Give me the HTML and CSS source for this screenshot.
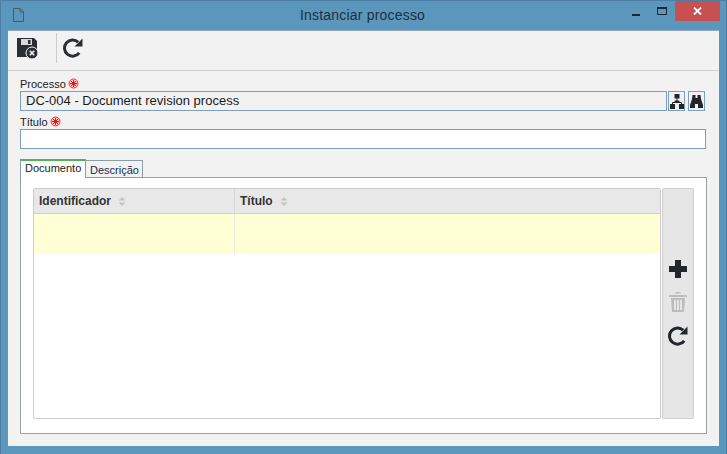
FILE: index.html
```html
<!DOCTYPE html>
<html lang="pt">
<head>
<meta charset="utf-8">
<title>Instanciar processo</title>
<link rel="stylesheet" href="styles.css">
</head>
<body>
<div class="window">
  <header class="titlebar">
    <svg class="doc-icon" width="11" height="14" viewBox="0 0 11 14"><path d="M.5.5h6.500l3.500 3.500v9.500h-10zM7 .5v3.500h3.500" fill="none" stroke="#4c5a66"/></svg>
    <div class="title">Instanciar processo</div>
    <div class="controls">
      <span class="ctl"><svg width="8" height="2" viewBox="0 0 8 2"><rect width="8" height="2" fill="#20262c"/></svg></span>
      <span class="ctl max"><svg width="10" height="8" viewBox="0 0 10 8"><path d="M.5 1h9v6.500h-9z" fill="none" stroke="#20262c"/><rect width="10" height="2" fill="#20262c"/></svg></span>
      <span class="ctl close"><svg width="9" height="8" viewBox="0 0 9 8"><path d="M1 .5l7 7M8 .5l-7 7" stroke="#fff" stroke-width="1.800"/></svg></span>
    </div>
  </header>
  <main class="client">
    <div class="toolbar">
      <svg class="tb-save" width="22" height="21" viewBox="0 0 22 21">
        <path d="M0 0h17l3 3v16h-20z" fill="#2b2f33"/>
        <rect x="4" y="1" width="11" height="6" fill="#d8d8d8"/><rect x="11" y="2" width="2.500" height="4" fill="#2b2f33"/>
        <circle cx="15" cy="15" r="6" fill="#2b2f33" stroke="#f2f2f2"/>
        <path d="M12.800 12.800l4.400 4.400M17.200 12.800l-4.400 4.400" stroke="#f2f2f2" stroke-width="1.600"/>
      </svg>
      <span class="tb-sep"></span>
      <svg class="tb-reload" width="20" height="20" viewBox="0 0 20 20"><path d="M16.200 14.800a8.100 8.100 0 1 1 -1-10.600" fill="none" stroke="#2b2f33" stroke-width="3"/><path d="M19.500 .5v8h-8z" fill="#2b2f33"/></svg>
    </div>
    <div class="form">
      <label class="lbl proc-lbl">Processo <svg class="req" width="11" height="11" viewBox="0 0 11 11"><circle cx="5.500" cy="5.500" r="4.500" fill="#fcc" stroke="#e33"/><path d="M5.500 2v7M2 5.500h7M3 3l5 5M8 3l-5 5" stroke="#e11"/></svg></label>
      <div class="proc-row">
        <div class="input readonly">DC-004 - Document revision process</div>
        <span class="btn first"><svg width="14" height="15" viewBox="0 0 14 15"><path d="M4.500 0h5v4.500h-5zM0 10h5v5h-5zM9 10h5v5h-5z" fill="#20262c"/><path d="M7 4v4M2.500 11v-2.500h9v2.500" fill="none" stroke="#20262c"/><path d="M5 6.500h4l1 2h-6z" fill="#20262c"/></svg></span>
        <span class="btn"><svg width="13" height="13" viewBox="0 0 13 13"><path d="M2.500 0h3v3h2v-3h3l.5 4 2 6v3h-5v-4h-3v4h-5v-3l2-6z" fill="#20262c"/></svg></span>
      </div>
      <label class="lbl tit-lbl">Título <svg class="req" width="11" height="11" viewBox="0 0 11 11"><circle cx="5.500" cy="5.500" r="4.500" fill="#fcc" stroke="#e33"/><path d="M5.500 2v7M2 5.500h7M3 3l5 5M8 3l-5 5" stroke="#e11"/></svg></label>
      <div class="input white"></div>
      <div class="tabs">
        <span class="tab active">Documento</span>
        <span class="tab second">Descrição</span>
      </div>
      <section class="panel">
        <div class="grid">
          <div class="head">
            <div class="col c1">Identificador <svg class="sort" width="8" height="9" viewBox="0 0 8 9"><path d="M4 0l3.500 3.500h-7zM4 9l3.500-3.500h-7z" fill="#c4c4c4"/></svg></div>
            <div class="col">Título <svg class="sort" width="8" height="9" viewBox="0 0 8 9"><path d="M4 0l3.500 3.500h-7zM4 9l3.500-3.500h-7z" fill="#c4c4c4"/></svg></div>
          </div>
          <div class="row"><div class="cell"></div><div class="cell2"></div></div>
        </div>
        <div class="side">
          <svg width="18" height="18" viewBox="0 0 18 18"><path d="M6 0h6v6h6v6h-6v6h-6v-6h-6v-6h6z" fill="#20262c"/></svg>
          <svg width="18" height="20" viewBox="0 0 18 20"><path d="M0 3h18v2h-18zM6 1.500l1-1.500h4l1 1.500zM2 6h14l-1 14h-12zM5 8v10h2v-10zM8 8v10h2v-10zM11 8v10h2v-10z" fill="#bdbdbd" fill-rule="evenodd"/></svg>
          <svg width="20" height="20" viewBox="0 0 20 20"><path d="M16.200 14.800a8.100 8.100 0 1 1 -1-10.600" fill="none" stroke="#20262c" stroke-width="3"/><path d="M19.500 .5v8h-8z" fill="#20262c"/></svg>
        </div>
      </section>
    </div>
  </main>
</div>
</body>
</html>
```
FILE: styles.css
```css
* { box-sizing: border-box; }
html, body { margin: 0; padding: 0; }
body { width: 727px; height: 454px; overflow: hidden; font-family: "Liberation Sans", Arial, sans-serif; color: #1a1a1a; }
.window { width: 727px; height: 454px; background: #5b96bd; border: 1px solid #4a7ea3; border-bottom-width: 0; padding: 0 7px 8px; display: flex; flex-direction: column; }
.titlebar { height: 29px; flex: none; display: flex; align-items: flex-start; position: relative; }
.doc-icon { margin: 7px 0 0 5px; }
.title { position: absolute; left: 0; right: 0; top: 6px; text-align: center; font-size: 14px; line-height: 17px; color: #20303c; letter-spacing: 0.2px; padding-right: 2px; }
.controls { margin-left: auto; display: flex; position: relative; margin-right: -1px; }
.ctl { width: 26px; height: 20px; display: flex; align-items: center; justify-content: center; }
.ctl svg { margin-top: 7px; }
.max svg { margin-top: 0; margin-bottom: 1px; }
.close { width: 45px; height: 20px; background: #c75050; }
.close svg { margin-top: 0; }
.client { flex: 1; background: #f2f2f2; border-top: 1px solid #8fa7b8; display: flex; flex-direction: column; }
.toolbar { height: 40px; flex: none; border-bottom: 1px solid #cfcfcf; display: flex; align-items: flex-start; padding-left: 9px; }
.tb-save { margin-top: 7px; }
.tb-sep { width: 1px; height: 30px; background: #ccc; margin: 2px 0 0 17px; }
.tb-reload { margin: 7px 0 0 6px; }
.form { flex: 1; padding: 6px 12px 12px; display: flex; flex-direction: column; }
.lbl { font-size: 11px; line-height: 14px; display: block; height: 14px; }
.req { vertical-align: -1px; margin-left: -1px; }
.proc-row { display: flex; }
.input { height: 20px; border: 1px solid #7c9ebf; font-size: 13px; line-height: 18px; padding-left: 5px; width: 686px; flex: none; }
.readonly { width: 647px; background: #f2f2f2; }
.white { background: #fff; }
.btn { height: 20px; width: 17px; flex: none; border: 1px solid #7c9ebf; display: flex; align-items: center; justify-content: center; background: #f2f2f2; }
.first { margin: 0 3px 0 1px; }
.tit-lbl { margin-top: 4px; }
.tabs { display: flex; align-items: flex-end; margin-top: 10px; height: 19px; position: relative; z-index: 1; margin-bottom: -1px; }
.tab { font-size: 11px; line-height: 14px; height: 18px; border: 1px solid #8a9ea8; background: #f2f2f2; color: #1c2a4a; }
.active { height: 19px; width: 66px; background: #fff; border-width: 2px 1px 0 1px; border-color: #58b058 #8a9ea8 #fff #8a9ea8; color: #222; padding: 0 0 0 4px; }
.second { width: 58px; padding: 2px 0 0 4px; margin-left: -1px; }
.panel { flex: 1; background: #fff; border: 1px solid #99a3a3; padding: 10px 11px 14px 12px; display: flex; gap: 1px; }
.grid { width: 628px; flex: none; border: 1px solid #cccccc; border-radius: 2px; }
.head { height: 25px; background: #e8e8e8; border-bottom: 1px solid #d2d2d2; display: flex; font-size: 12px; font-weight: bold; color: #333; }
.col { padding: 5px 5px 0; line-height: 15px; }
.c1 { width: 201px; border-right: 1px solid #d8d8d8; }
.sort { margin-left: 4px; vertical-align: -1px; }
.row { height: 40px; background: #ffffd6; display: flex; }
.cell { width: 201px; border-right: 1px solid #ecece0; }
.side { width: 32px; flex: none; background: #e6e6e6; border: 1px solid #cfcfcf; border-radius: 2px; display: flex; flex-direction: column; align-items: center; padding-top: 71px; gap: 14px; }
```
